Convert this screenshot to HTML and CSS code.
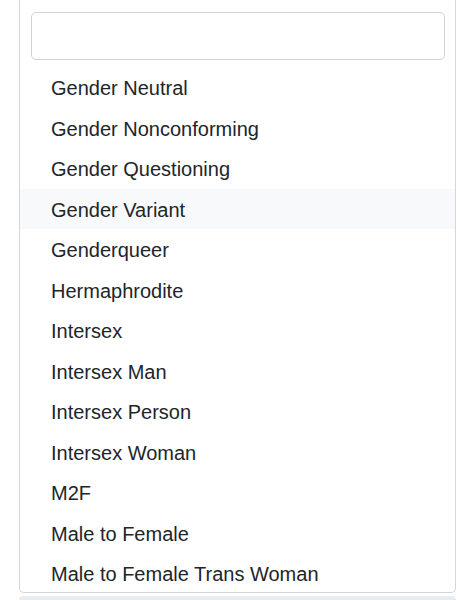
FILE: index.html
```html
<!DOCTYPE html>
<html lang="en">
<head>
	<meta charset="UTF-8">
	<meta name="viewport" content="width=device-width, initial-scale=1.0">
	<title>Gender select</title>
	<link rel="stylesheet" href="styles.css">
</head>
<body>
	<div class="page">
		<div class="dropdown">
			<div class="search">
				<input type="text" class="search-input">
			</div>
			<ul class="options">
				<li class="option">Gender Neutral</li>
				<li class="option">Gender Nonconforming</li>
				<li class="option">Gender Questioning</li>
				<li class="option active">Gender Variant</li>
				<li class="option">Genderqueer</li>
				<li class="option">Hermaphrodite</li>
				<li class="option">Intersex</li>
				<li class="option">Intersex Man</li>
				<li class="option">Intersex Person</li>
				<li class="option">Intersex Woman</li>
				<li class="option">M2F</li>
				<li class="option">Male to Female</li>
				<li class="option">Male to Female Trans Woman</li>
			</ul>
		</div>
		<div class="next-field"></div>
	</div>
</body>
</html>
```

FILE: styles.css
```css
:root {
	--text-color:		#212529;
	--border-color:		#d3d6da;
	--input-border:		#ced4da;
	--active-bg:		#f8f9fa;
	--field-bg:		#e9ecef;
}

* {
	padding:		0;
	margin:			0;
	box-sizing:		border-box;
}

body {
	background:		white;
	font-family:		"Liberation Sans", Arial, Helvetica, sans-serif;
	color:			var(--text-color);
	overflow:		hidden;
}

.page {
	width:			475px;
	height:			600px;
	padding:		0 19px 0 19px;
	display:		flex;
	flex-direction:		column;
	gap:			3px;
}

.dropdown {
	border:			1px solid var(--border-color);
	border-top:		none;
	border-radius:		0 0 5px 5px;
	background:		white;
	height:			593px;
	flex-shrink:		0;
	overflow:		hidden;
}

.search {
	padding:		12px 10px 7px 11px;
}

.search-input {
	display:		block;
	width:			100%;
	height:			48px;
	border:			1px solid var(--input-border);
	border-radius:		5px;
	background:		white;
	outline:		none;
}

.options {
	list-style:		none;
}

.option {
	height:			40.5px;
	line-height:		40.5px;
	padding-top:		1px;
	padding-left:		31px;
	font-size:		20px;
	white-space:		nowrap;
}

.option.active {
	background:		var(--active-bg);
}

.next-field {
	height:			20px;
	background:		var(--field-bg);
	border-radius:		5px 5px 0 0;
}
```
